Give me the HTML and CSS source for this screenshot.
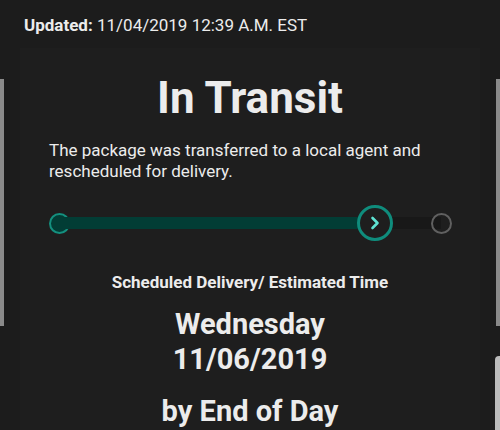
FILE: index.html
```html
<!DOCTYPE html>
<html lang="en">
<head>
<meta charset="UTF-8">
<meta name="viewport" content="width=device-width, initial-scale=1.0">
<title>Tracking</title>
<link rel="stylesheet" href="styles.css">
</head>
<body>
  <div class="updated"><b>Updated:</b> 11/04/2019 12:39 A.M. EST</div>
  <div class="card">
    <h1 class="status">In Transit</h1>
    <p class="desc">The package was transferred to a local agent and rescheduled for delivery.</p>
    <div class="progress">
      <div class="dot start"></div>
      <div class="track"><div class="fill" style="width: 316px"></div></div>
      <div class="dot current">
        <svg width="12" height="16" viewBox="0 0 12 16"><path d="M3.5 3 L8.5 8 L3.5 13" fill="none" stroke="#5fe3d3" stroke-width="2.6" stroke-linecap="round" stroke-linejoin="round"/></svg>
      </div>
      <div class="dot end"></div>
    </div>
    <div class="label">Scheduled Delivery/ Estimated Time</div>
    <div class="date">Wednesday<br>11/06/2019</div>
    <div class="eod">by End of Day</div>
  </div>
  <div class="scroll left"></div>
  <div class="scroll right"></div>
  <div class="scroll right2"></div>
</body>
</html>
```
FILE: styles.css
```css
body { background-color: #1c1c1c; color: #ececec; font-family: Roboto, "Liberation Sans", sans-serif; margin: 0; padding: 0; height: 430px; overflow: hidden; }
.updated { font-size: 17px; line-height: 20px; padding: 15px 24px 0; height: 33px; }
.updated b { font-weight: 700; }
.card { background-color: #1e1e1e; margin: 0 20px; padding: 24px 29px 0; height: 358px; text-align: center; }
.status { font-size: 44px; line-height: 52px; font-weight: 700; margin: 0; }
.desc { font-size: 17px; line-height: 21px; margin: 16px 0 0; text-align: left; }
.progress { position: relative; height: 36px; margin: 23px 0 0; width: 402px; }
.track { position: absolute; left: 10px; right: 10px; top: 12px; height: 12px; background-color: #181818; }
.fill { height: 100%; background-color: #023d35; }
.dot { position: absolute; border-radius: 50%; box-sizing: border-box; }
.dot.start { left: 0; top: 8px; width: 21px; height: 21px; background-color: #023d35; border: 2px solid #14907f; }
.dot.current { left: 308px; top: 0; width: 36px; height: 36px; background-color: #1e1e1e; border: 3px solid #0f8c7c; display: flex; align-items: center; justify-content: center; }
.dot.end { left: 382px; top: 8px; width: 21px; height: 21px; border: 2px solid #606060; }
.label { font-size: 17px; line-height: 20px; font-weight: 700; margin-top: 31px; }
.date { font-size: 29px; line-height: 35px; font-weight: 700; margin-top: 15px; }
.eod { font-size: 29px; line-height: 34px; font-weight: 700; margin-top: 17px; }
.scroll { position: absolute; width: 4px; background-color: #8a8a8a; }
.scroll.left { left: 0; top: 79px; height: 247px; }
.scroll.right { right: 0; top: 79px; height: 247px; }
.scroll.right2 { right: 0; top: 356px; height: 74px; width: 5px; background-color: #bcbcbc; border-top-left-radius: 4px; }
```
